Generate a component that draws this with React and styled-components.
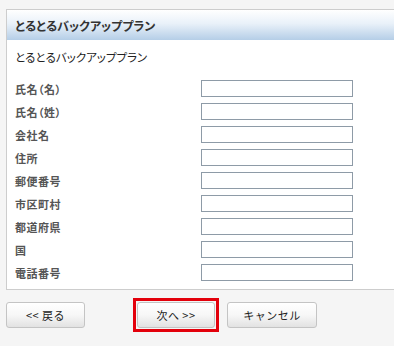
import React from "react";
import styled, { createGlobalStyle } from "styled-components";

const GlobalStyle = createGlobalStyle`
  html, body {
    margin: 0;
    padding: 0;
    background: #f5f5f5;
    overflow: hidden;
  }
  body {
    font-family: "Noto Sans CJK JP", "Noto Sans", sans-serif;
    font-feature-settings: "palt";
    color: #222;
  }
`;

const Page = styled.div`
  padding: 9px 0 0 6px;
`;

const Panel = styled.div`
  width: 388px;
  box-sizing: border-box;
  background: #fff;
  border: 1px solid #cdcdcd;
  border-right: none;
`;

const PanelHeader = styled.div`
  height: 30px;
  display: flex;
  align-items: center;
  padding-left: 8px;
  background: linear-gradient(to bottom, #ffffff 0%, #e9f1f9 45%, #b5cee7 100%);
  font-size: 12px;
  font-weight: bold;
  color: #333;
`;

const PanelBody = styled.div`
  padding: 10px 0 8px 8px;
`;

const Intro = styled.div`
  font-size: 11.5px;
  line-height: 14px;
  color: #222;
`;

const Form = styled.div`
  display: grid;
  grid-template-columns: 186px 152px;
  row-gap: 6px;
  margin-top: 16px;
`;

const Label = styled.div`
  height: 17px;
  display: flex;
  align-items: center;
  font-size: 11px;
  font-weight: bold;
  color: #555;
  letter-spacing: 0.5px;
`;

const Field = styled.input`
  box-sizing: border-box;
  width: 152px;
  height: 17px;
  margin: 0;
  padding: 0 2px;
  border: 1px solid #8e9ba7;
  background: #fff;
  outline: none;
`;

const Footer = styled.div`
  display: flex;
  align-items: center;
  margin-top: 8px;
`;

const Highlight = styled.div`
  display: flex;
  padding: 1px;
  border: 3px solid #e3000b;
  margin-left: ${(p) => p.$ml || 0}px;
`;

const Button = styled.button`
  box-sizing: border-box;
  width: ${(p) => p.$w}px;
  height: 26px;
  margin-left: ${(p) => p.$ml || 0}px;
  padding: 0;
  border: 1px solid #c4c4c4;
  border-radius: 3px;
  background: linear-gradient(to bottom, #ffffff 0%, #f7f7f7 50%, #e2e2e2 100%);
  font-family: "Noto Sans CJK JP", sans-serif;
  font-size: 11px;
  color: #222;
  letter-spacing: 0.5px;
`;

const fields = [
  "氏名（名）",
  "氏名（姓）",
  "会社名",
  "住所",
  "郵便番号",
  "市区町村",
  "都道府県",
  "国",
  "電話番号",
];

export default function App() {
  return (
    <>
      <GlobalStyle />
      <Page>
        <Panel>
          <PanelHeader>とるとるバックアッププラン</PanelHeader>
          <PanelBody>
            <Intro>とるとるバックアッププラン</Intro>
            <Form>
              {fields.map((f) => (
                <React.Fragment key={f}>
                  <Label>{f}</Label>
                  <Field type="text" />
                </React.Fragment>
              ))}
            </Form>
          </PanelBody>
        </Panel>
        <Footer>
          <Button $w={79}>&lt;&lt; 戻る</Button>
          <Highlight $ml={48}>
            <Button $w={78}>次へ &gt;&gt;</Button>
          </Highlight>
          <Button $w={90} $ml={8}>キャンセル</Button>
        </Footer>
      </Page>
    </>
  );
}
